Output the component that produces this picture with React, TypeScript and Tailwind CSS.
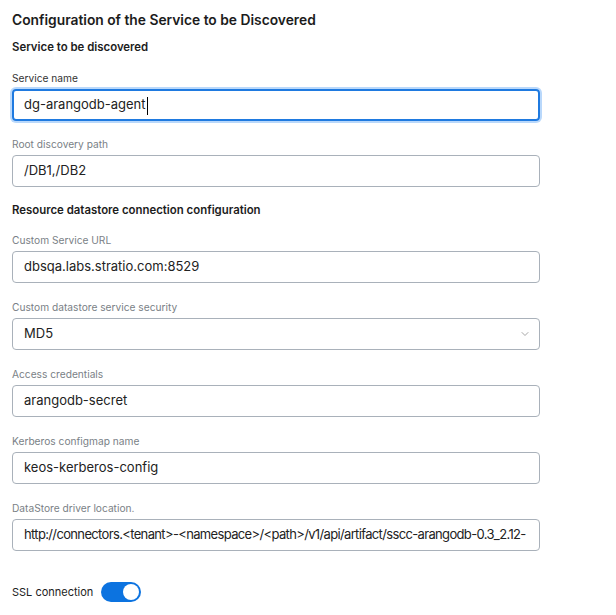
import { ChevronDown } from 'lucide-react'

const FONT = { fontFamily: 'Inter, "Noto Sans", sans-serif' }

function Field({ label, value, focused, select, tight }: { label: string; value: string; focused?: boolean; select?: boolean; tight?: boolean }) {
  return (
    <div className="flex flex-col">
      <label className={`text-[10.2px] leading-[14px] mb-[4px] ${focused ? 'text-[#333]' : 'text-[#7a7f86]'}`}>{label}</label>
      <div
        className={`h-[32px] w-[528px] rounded-[4px] flex items-center text-[13px] text-[#222] ${
          focused
            ? 'border-2 border-[#1f7ae0] shadow-[0_0_0_2px_#b9d8fb] px-[10px]'
            : 'border border-[#a9b1ba] px-[11px]'
        }`}
      >
        <span className={`flex-1 whitespace-nowrap overflow-hidden ${tight ? 'tracking-[-0.65px]' : ''}`}>
          {value}
          {focused && <span className="inline-block w-px h-[18px] bg-black align-middle ml-px" />}
        </span>
        {select && <ChevronDown size={12} strokeWidth={1.5} className="text-[#888] -mr-[3px]" />}
      </div>
    </div>
  )
}

export default function App() {
  return (
    <div className="bg-white w-[616px] h-[615px] px-[12px] pt-[11px] text-[#1c1c1c]" style={FONT}>
      <h1 className="text-[13.8px] font-semibold leading-[18px]">Configuration of the Service to be Discovered</h1>
      <h2 className="text-[11.4px] font-semibold mt-[11px] leading-[15px]">Service to be discovered</h2>

      <div className="mt-[16px] flex flex-col gap-[16px]">
        <Field label="Service name" value="dg-arangodb-agent" focused />
        <Field label="Root discovery path" value="/DB1,/DB2" />
      </div>

      <h2 className="text-[11.4px] font-semibold mt-[16px] leading-[15px]">Resource datastore connection configuration</h2>

      <div className="mt-[15px] flex flex-col gap-[17px]">
        <Field label="Custom Service URL" value="dbsqa.labs.stratio.com:8529" />
        <Field label="Custom datastore service security" value="MD5" select />
        <Field label="Access credentials" value="arangodb-secret" />
        <Field label="Kerberos configmap name" value="keos-kerberos-config" />
        <Field
          label="DataStore driver location."
          value="http://connectors.<tenant>-<namespace>/<path>/v1/api/artifact/sscc-arangodb-0.3_2.12-"
          tight
        />
      </div>

      <div className="mt-[31px] flex items-center gap-[8px]">
        <span className="text-[11px] text-[#222]">SSL connection</span>
        <div className="w-[40px] h-[20px] rounded-full bg-[#0c73e0] flex items-center justify-end pr-[2px]">
          <div className="w-[16px] h-[16px] rounded-full bg-white" />
        </div>
      </div>
    </div>
  )
}
